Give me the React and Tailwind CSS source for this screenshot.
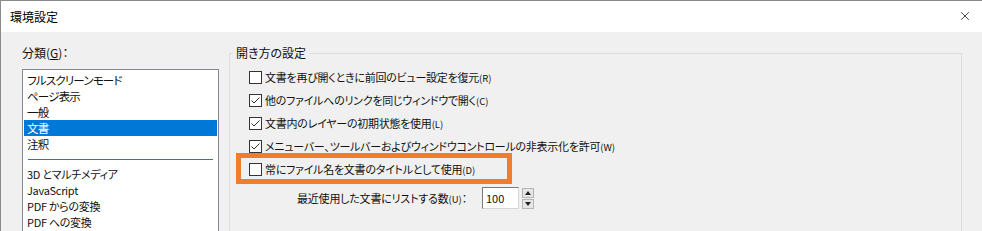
import { X } from 'lucide-react';

const jp = "font-['Noto_Sans_CJK_JP','Noto_Sans',sans-serif] [font-feature-settings:'palt']";

// チェックボックス
function Check({ checked }) {
    return (
        <span className="w-[13px] h-[13px] border border-[#333333] bg-white flex items-center justify-center shrink-0">
            {checked && (
                <svg width="11" height="11" viewBox="0 0 11 11">
                    <polyline points="1.5,5.5 4,8 9.5,2.5" fill="none" stroke="#333333" strokeWidth="1" />
                </svg>
            )}
        </span>
    );
}

function Row({ checked, label, hotkey, children }) {
    return (
        <div className="relative flex items-center h-[23px] w-fit">
            {children}
            <Check checked={checked} />
            <span className="ml-[3px] text-[11px] tracking-[-0.25px] leading-[16px] text-[#111] whitespace-nowrap">
                {label}
                <span className="text-[9.5px] tracking-normal">({hotkey})</span>
            </span>
        </div>
    );
}

const group1 = ['フルスクリーンモード', 'ページ表示', '一般', '文書', '注釈'];
const group2 = ['3D とマルチメディア', 'JavaScript', 'PDF からの変換', 'PDF への変換'];

export default function App() {
    return (
        <div className={`w-[982px] h-[231px] overflow-hidden bg-[#f0f0f0] border-t border-l border-[#8a8a8a] ${jp}`}>
            {/* タイトルバー */}
            <div className="h-[31px] bg-white flex items-center justify-between pl-[9px] pr-[10px]">
                <span className="text-[12px] text-black mt-px">環境設定</span>
                <X size={14} strokeWidth={1.2} className="text-black mt-[-1px]" />
            </div>

            <div className="flex">
                {/* 左: 分類 */}
                <div className="w-[228px] pl-[21px] pt-[13px] shrink-0">
                    <div className="h-[16px] leading-[16px] text-[12px] text-[#111]">
                        分類(<span className="underline">G</span>)：
                    </div>
                    <div className="mt-[8px] w-[197px] h-[200px] border border-[#828790] bg-white pt-[2px] px-px">
                        {group1.map((item) => (
                            <div
                                key={item}
                                className={`h-[16px] leading-[16px] text-[11.5px] tracking-[-0.8px] pl-[3px] ${item === '文書' ? 'bg-[#0078d7] text-white' : 'text-[#111]'}`}
                            >
                                {item}
                            </div>
                        ))}
                        <div className="mt-[7px] mx-[4px] h-px bg-[#3c6ea8]"></div>
                        <div className="mt-[6px]">
                            {group2.map((item) => (
                                <div key={item} className="h-[16px] leading-[16px] text-[11px] tracking-[-0.3px] pl-[3px] text-[#111]">
                                    {item}
                                </div>
                            ))}
                        </div>
                    </div>
                </div>

                {/* 右: 開き方の設定 */}
                <div className="flex-1 pt-[13px] pr-[20px]">
                    <fieldset className="border border-[#dcdcdc] h-[200px] pl-[19px]">
                        <legend className="ml-[-16px] px-[3px] h-[16px] leading-[16px] text-[12px] text-[#111]">開き方の設定</legend>
                        <div className="pt-[5px]">
                            <Row checked={false} label="文書を再び開くときに前回のビュー設定を復元" hotkey="R" />
                            <Row checked label="他のファイルへのリンクを同じウィンドウで開く" hotkey="C" />
                            <Row checked label="文書内のレイヤーの初期状態を使用" hotkey="L" />
                            <Row checked label="メニューバー、ツールバーおよびウィンドウコントロールの非表示化を許可" hotkey="W" />
                            <Row checked={false} label="常にファイル名を文書のタイトルとして使用" hotkey="D">
                                {/* オレンジの強調枠 */}
                                <span className="absolute left-[-13px] top-[-5px] w-[276px] h-[31px] border-[5px] border-[#ef7d2b] pointer-events-none"></span>
                            </Row>
                            <div className="mt-[6px] pl-[48px] flex items-center h-[22px]">
                                <span className="w-[185px] text-[11px] tracking-[-0.2px] leading-[16px] text-[#111] whitespace-nowrap">
                                    最近使用した文書にリストする数<span className="text-[9.5px] tracking-normal">(U)</span>：
                                </span>
                                <div className="w-[37px] h-[22px] bg-white border border-[#7a7a7a] border-r-[#d6d6d6] border-b-[#d6d6d6] flex items-center pl-[3px] text-[11px] text-[#111]">
                                    100
                                </div>
                                <div className="ml-[3px] flex flex-col gap-px">
                                    <div className="w-[12px] h-[10px] bg-[#e6e6e6] border border-[#b5b5b5] flex items-center justify-center">
                                        <svg width="6" height="4" viewBox="0 0 6 4"><polygon points="3,0 6,4 0,4" fill="#222" /></svg>
                                    </div>
                                    <div className="w-[12px] h-[10px] bg-[#e6e6e6] border border-[#b5b5b5] flex items-center justify-center">
                                        <svg width="6" height="4" viewBox="0 0 6 4"><polygon points="0,0 6,0 3,4" fill="#222" /></svg>
                                    </div>
                                </div>
                            </div>
                        </div>
                    </fieldset>
                </div>
            </div>
        </div>
    );
}
